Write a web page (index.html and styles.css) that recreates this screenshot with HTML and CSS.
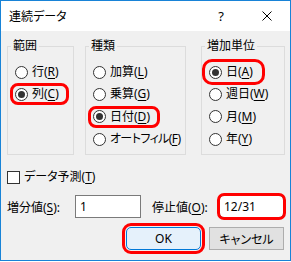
FILE: index.html
```html
<!DOCTYPE html>
<html lang="ja">
<head>
    <meta charset="UTF-8">
    <meta name="viewport" content="width=device-width, initial-scale=1.0">
    <title>連続データ</title>
    <link rel="stylesheet" href="styles.css">
</head>
<body>

    <div class="window">
        <!-- title bar -->
        <div class="titlebar">
            <span class="title">連続データ</span>
            <span class="cap-btn help">?</span>
            <span class="cap-btn close">
                <svg width="10" height="10" viewBox="0 0 10 10">
                    <path d="M0.5 0.5 L9.5 9.5 M9.5 0.5 L0.5 9.5" stroke="#000" stroke-width="1" fill="none"/>
                </svg>
            </span>
        </div>

        <div class="dialog">
            <div class="groups">
                <fieldset class="group g-range">
                    <legend>範囲</legend>
                    <div class="opts">
                        <label class="opt"><span class="radio"></span><span>行(<u>R</u>)</span></label>
                        <label class="opt mark"><span class="radio on"></span><span>列(<u>C</u>)</span></label>
                    </div>
                </fieldset>

                <fieldset class="group g-type">
                    <legend>種類</legend>
                    <div class="opts">
                        <label class="opt"><span class="radio"></span><span>加算(<u>L</u>)</span></label>
                        <label class="opt"><span class="radio"></span><span>乗算(<u>G</u>)</span></label>
                        <label class="opt mark"><span class="radio on"></span><span>日付(<u>D</u>)</span></label>
                        <label class="opt"><span class="radio"></span><span class="tight">オートフィル(<u>F</u>)</span></label>
                    </div>
                </fieldset>

                <fieldset class="group g-unit">
                    <legend>増加単位</legend>
                    <div class="opts">
                        <label class="opt mark big"><span class="radio on"></span><span>日(<u>A</u>)</span></label>
                        <label class="opt"><span class="radio"></span><span>週日(<u>W</u>)</span></label>
                        <label class="opt"><span class="radio"></span><span>月(<u>M</u>)</span></label>
                        <label class="opt"><span class="radio"></span><span>年(<u>Y</u>)</span></label>
                    </div>
                </fieldset>
            </div>

            <label class="check-row"><span class="checkbox"></span><span>データ予測(<u>T</u>)</span></label>

            <div class="field-row">
                <span class="field-label">増分値(<u>S</u>):</span>
                <div class="textbox">1</div>
                <span class="field-label second">停止値(<u>O</u>):</span>
                <div class="textbox stop mark">12/31</div>
            </div>

            <div class="buttons">
                <button class="btn default mark">OK</button>
                <button class="btn">キャンセル</button>
            </div>
        </div>
    </div>

</body>
</html>
```

FILE: styles.css
```css
* { box-sizing: border-box; }

body {
    margin: 0;
    background: #fff;
    font-family: "Noto Sans", "Noto Sans CJK JP", sans-serif;
    font-size: 12px;
    color: #000;
    font-feature-settings: "palt";
}

u { text-decoration-thickness: 1px; text-underline-offset: 2px; }

.window {
    width: 291px;
    height: 261px;
    border: 1px solid #1883d7;
    display: flex;
    flex-direction: column;
}

.titlebar {
    height: 30px;
    flex: none;
    display: flex;
    align-items: center;
    background: #fff;
}

.title {
    flex: 1;
    padding-left: 8px;
    font-size: 12px;
}

.cap-btn {
    width: 46px;
    height: 30px;
    display: flex;
    align-items: center;
    justify-content: center;
}

.help { font-size: 13px; }

.dialog {
    flex: 1;
    background: #f0f0f0;
    padding: 8px 6px 0 6px;
}

/* group boxes */
.groups {
    display: flex;
    height: 116px;
}

.group {
    flex: none;
    margin: 0;
    padding: 0;
    min-width: 0;
    border: 1px solid #dcdcdc;
}

.group legend {
    margin-left: 3px;
    padding: 0 2px;
    line-height: 14px;
}

.g-range { width: 67px; }
.g-type { width: 101px; margin-left: 11px; }
.g-unit { width: 84px; margin-left: 15px; }

.opts {
    display: flex;
    flex-direction: column;
    align-items: flex-start;
    gap: 6.4px;
    padding: 11px 0 0 5px;
}

.opt {
    display: inline-flex;
    align-items: center;
    gap: 4px;
    height: 16px;
    padding: 1px 7px 1px 2px;
    line-height: 14px;
    white-space: nowrap;
}

.tight { letter-spacing: -0.6px; }

.radio {
    width: 13px;
    height: 13px;
    flex: none;
    border: 1px solid #333;
    border-radius: 50%;
    background: #fff;
    display: flex;
    align-items: center;
    justify-content: center;
}

.radio.on::after {
    content: "";
    width: 7px;
    height: 7px;
    border-radius: 50%;
    background: #333;
}

/* red annotation frames */
.mark {
    outline: 3px solid #f00;
    border-radius: 5px;
}

.opt.mark.big { outline-offset: 2px; }

.check-row {
    display: flex;
    align-items: center;
    gap: 4px;
    height: 16px;
    margin-top: 14px;
    line-height: 14px;
}

.checkbox {
    width: 13px;
    height: 13px;
    border: 1px solid #333;
    background: #fff;
}

.field-row {
    display: flex;
    align-items: center;
    height: 23px;
    margin-top: 10px;
}

.field-label { width: 68px; white-space: nowrap; }
.field-label.second { width: 67px; margin-left: 11px; }

.textbox {
    width: 66px;
    height: 23px;
    border: 1px solid #7a7a7a;
    background: #fff;
    padding-left: 4px;
    line-height: 21px;
}

.textbox.stop { width: 65px; outline-offset: -1px; }

.buttons {
    display: flex;
    justify-content: flex-end;
    gap: 8px;
    margin-top: 9px;
}

.btn {
    width: 75px;
    height: 23px;
    padding: 0;
    border: 1px solid #adadad;
    background: #e1e1e1;
    font-family: inherit;
    font-size: 12px;
    font-feature-settings: "palt";
    color: #000;
}

.btn.default {
    border-color: #0078d7;
    background: #e5f1fb;
    outline-offset: 1px;
}
```
